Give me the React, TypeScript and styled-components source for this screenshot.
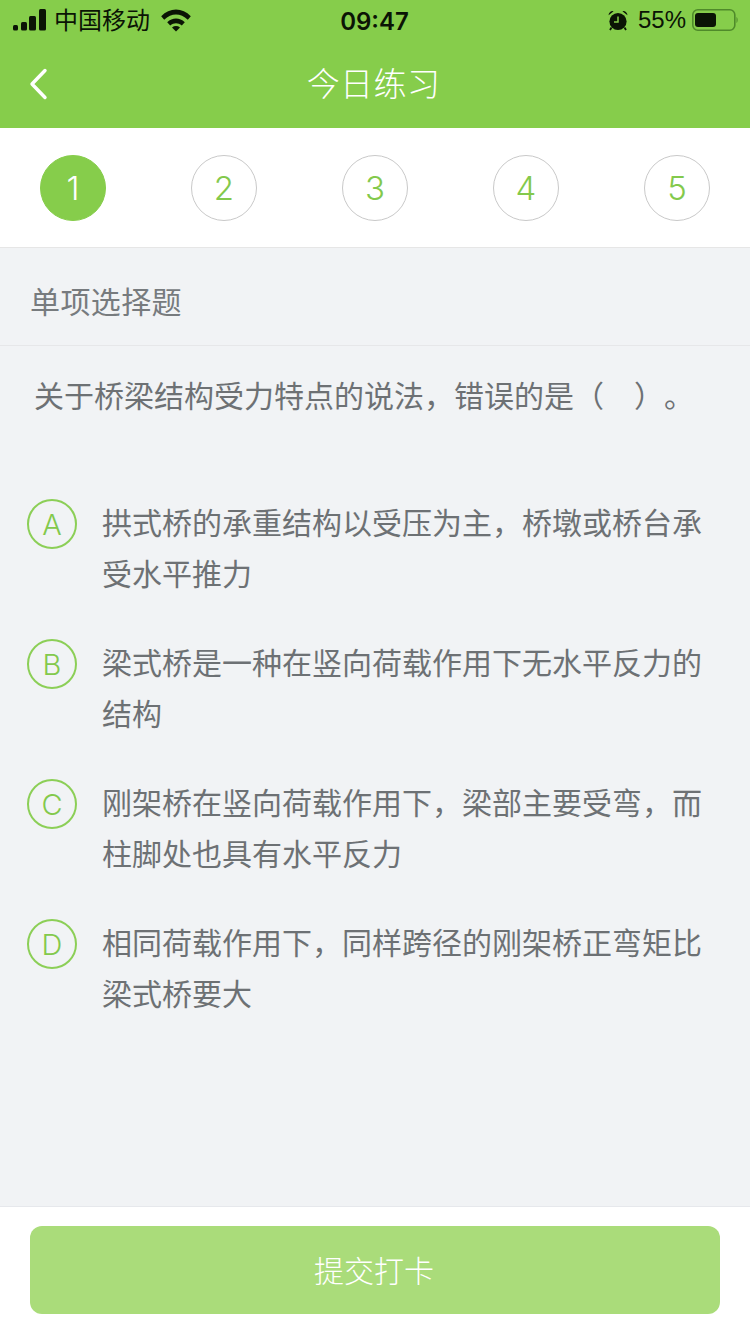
import React from "react";
import styled, { createGlobalStyle } from "styled-components";

const CJK = `"Noto Sans CJK SC", sans-serif`;

const GlobalStyle = createGlobalStyle`
  html, body {
    margin: 0;
    padding: 0;
    background: #f1f3f5;
  }
  * {
    box-sizing: border-box;
  }
`;

const Page = styled.div`
  width: 750px;
  height: 1334px;
  display: flex;
  flex-direction: column;
  background: #f1f3f5;
  font-family: ${CJK};
  text-spacing-trim: space-all;
  overflow: hidden;
`;

const Header = styled.header`
  height: 128px;
  flex: none;
  background: #86cd4b;
`;

const StatusBar = styled.div`
  height: 40px;
  padding: 0 12px 2px 13px;
  display: grid;
  grid-template-columns: 1fr auto 1fr;
  align-items: center;
  color: #0b1405;
`;

const StatusLeft = styled.div`
  display: flex;
  align-items: center;
  gap: 8px;
`;

const Carrier = styled.span`
  font-size: 24px;
  line-height: 38px;
  margin-right: 3px;
  padding-bottom: 2px;
`;

const Clock = styled.span`
  margin-right: 2px;
  padding-top: 3px;
  font-family: Inter, sans-serif;
  font-size: 24px;
  font-weight: 600;
`;

const StatusRight = styled.div`
  display: flex;
  align-items: center;
  justify-content: flex-end;
`;

const Percent = styled.span`
  font-family: "Liberation Sans", sans-serif;
  font-size: 24px;
  margin: 0 6px 0 10px;
`;

const NavBar = styled.div`
  height: 88px;
  padding-bottom: 5px;
  position: relative;
  display: flex;
  align-items: center;
  justify-content: center;
`;

const Back = styled.svg`
  position: absolute;
  left: 28px;
  top: 28px;
`;

const Title = styled.h1`
  margin: 0 3px 0 0;
  color: #fff;
  font-size: 33px;
  font-weight: 300;
  letter-spacing: 0.4px;
`;

const Steps = styled.nav`
  height: 120px;
  flex: none;
  padding: 27px 40px 0;
  display: flex;
  justify-content: space-between;
  align-items: flex-start;
  background: #fff;
  border-bottom: 1px solid #e6e6e6;
`;

const Step = styled.div<{ $active?: boolean }>`
  width: 66px;
  height: 66px;
  display: flex;
  align-items: center;
  justify-content: center;
  border-radius: 50%;
  font-family: Inter, sans-serif;
  font-size: 33px;
  font-weight: 300;
  color: ${(p) => (p.$active ? "#fff" : "#83c94c")};
  background: ${(p) => (p.$active ? "#86cd4b" : "#fff")};
  border: 1px solid ${(p) => (p.$active ? "#86cd4b" : "#c9c9c9")};
`;

const SectionLabel = styled.div`
  height: 98px;
  flex: none;
  padding: 6px 30px 0;
  display: flex;
  align-items: center;
  font-size: 30px;
  font-weight: 400;
  letter-spacing: 0.4px;
  color: #777b7e;
  border-bottom: 1px solid #e6e7e9;
`;

const Question = styled.p`
  margin: 0;
  padding: 22px 34px 0;
  font-size: 30px;
  line-height: 52px;
  font-weight: 400;
  color: #6d7174;
`;

const Options = styled.ul`
  flex: 1;
  margin: 76px 0 0;
  padding: 0 40px 0 27px;
  list-style: none;
  display: flex;
  flex-direction: column;
  gap: 38px;
`;

const Option = styled.li`
  display: flex;
  align-items: flex-start;
  gap: 25px;
`;

const Badge = styled.span`
  width: 50px;
  height: 50px;
  margin-top: 3px;
  flex: none;
  display: flex;
  align-items: center;
  justify-content: center;
  border: 2px solid #8ccf57;
  border-radius: 50%;
  font-family: Inter, sans-serif;
  font-size: 29px;
  font-weight: 300;
  color: #83c94c;
`;

const OptionText = styled.span`
  font-size: 30px;
  line-height: 51px;
  font-weight: 400;
  color: #6d7174;
`;

const Footer = styled.footer`
  height: 128px;
  flex: none;
  padding: 19px 30px 0;
  background: #fff;
  border-top: 1px solid #e6e8ec;
`;

const Submit = styled.button`
  width: 100%;
  height: 88px;
  display: block;
  padding: 0 2px 2px 0;
  border: 0;
  border-radius: 12px;
  background: #aadc7a;
  color: #fff;
  font-family: ${CJK};
  font-size: 30px;
  font-weight: 300;
`;

const SignalIcon = () => (
  <svg width="33" height="22" viewBox="0 0 33 22" fill="#0b1405">
    <rect x="0" y="16" width="5" height="5.5" rx="1.5" />
    <rect x="8" y="13" width="6" height="8.5" rx="1.5" />
    <rect x="16" y="7" width="7" height="14.5" rx="1.5" />
    <rect x="26" y="0" width="7" height="21.5" rx="1.5" />
  </svg>
);

const WifiIcon = () => (
  <svg width="30" height="23" viewBox="0 0 30 23" fill="#0b1405">
    <path d="M0.2 7.3C8.5-1.7 21.5-1.7 29.8 7.3L26.8 10.8C19.5 3.6 10.5 3.6 3.2 10.8Z" />
    <path d="M6.2 13.2C11.4 8.3 18.6 8.3 23.8 13.2L20.8 16.5C17.2 13.4 12.8 13.4 9.2 16.5Z" />
    <path d="M11 18.4C13.5 16.6 16.5 16.6 19 18.4L15 22.6Z" />
  </svg>
);

const AlarmIcon = () => (
  <svg width="20" height="21" viewBox="0 0 20 21" fill="#0b1405">
    <circle cx="10" cy="11.5" r="8.6" />
    <path d="M0.6 5.2A4 4 0 0 1 5.6 1.2ZM19.4 5.2A4 4 0 0 0 14.4 1.2Z" />
    <path d="M3.5 17.5L2 20M16.5 17.5L18 20" stroke="#0b1405" strokeWidth="1.8" />
    <path d="M10 6.5V12H6" fill="none" stroke="#86cd4b" strokeWidth="1.5" />
  </svg>
);

const BatteryIcon = () => (
  <svg width="46" height="22" viewBox="0 0 46 22">
    <rect x="0.8" y="0.8" width="42" height="20.4" rx="5" fill="none" stroke="#4f8a2a" strokeWidth="1.6" />
    <rect x="3" y="4" width="21" height="14" rx="3" fill="#0b1405" />
    <path d="M44.5 8C46 9 46 13 44.5 14Z" fill="#4f8a2a" />
  </svg>
);

const question =
  "\u5173\u4e8e\u6865\u6881\u7ed3\u6784\u53d7\u529b\u7279\u70b9\u7684\u8bf4\u6cd5\uff0c\u9519\u8bef\u7684\u662f\uff08\u3000\uff09\u3002";

const options = [
  { key: "A", text: "拱式桥的承重结构以受压为主\uff0c桥墩或桥台承受水平推力" },
  { key: "B", text: "梁式桥是一种在竖向荷载作用下无水平反力的结构" },
  { key: "C", text: "刚架桥在竖向荷载作用下\uff0c梁部主要受弯\uff0c而柱脚处也具有水平反力" },
  { key: "D", text: "相同荷载作用下\uff0c同样跨径的刚架桥正弯矩比梁式桥要大" },
];

const App = () => {
  return (
    <Page lang="zh-CN">
      <GlobalStyle />
      <Header>
        <StatusBar>
          <StatusLeft>
            <SignalIcon />
            <Carrier>中国移动</Carrier>
            <WifiIcon />
          </StatusLeft>
          <Clock>09:47</Clock>
          <StatusRight>
            <AlarmIcon />
            <Percent>55%</Percent>
            <BatteryIcon />
          </StatusRight>
        </StatusBar>
        <NavBar>
          <Back width="20" height="32" viewBox="0 0 20 32" fill="none">
            <path d="M17 2.5L4 16L17 29.5" stroke="#fff" strokeWidth="3.4" strokeLinecap="round" strokeLinejoin="round" />
          </Back>
          <Title>今日练习</Title>
        </NavBar>
      </Header>
      <Steps>
        {[1, 2, 3, 4, 5].map((n) => (
          <Step key={n} $active={n === 1}>
            {n}
          </Step>
        ))}
      </Steps>
      <SectionLabel>单项选择题</SectionLabel>
      <Question>{question}</Question>
      <Options>
        {options.map(({ key, text }) => (
          <Option key={key}>
            <Badge>{key}</Badge>
            <OptionText>{text}</OptionText>
          </Option>
        ))}
      </Options>
      <Footer>
        <Submit>提交打卡</Submit>
      </Footer>
    </Page>
  );
};

export default App;
